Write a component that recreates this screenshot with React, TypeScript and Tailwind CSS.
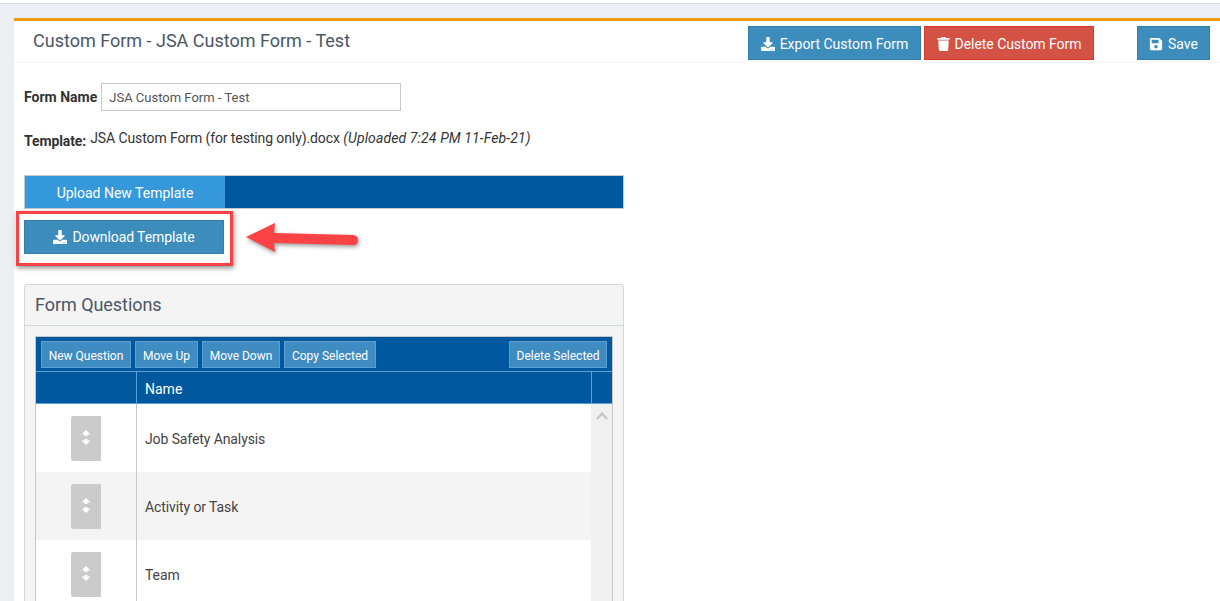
import React from 'react';
import { FaDownload, FaTrash, FaSave } from 'react-icons/fa';

const toolbarButton = 'h-[27px] pt-[3px] bg-[#3f8cc2] border border-[#5b9fd6] text-white text-[12px] leading-none';

const questions = ['Job Safety Analysis', 'Activity or Task', 'Team'];

// two small arrowheads, as in the drag handle
const DragIcon = () => (
  <svg className="mb-[2px]" width="10" height="15" viewBox="0 0 10 15" fill="currentColor">
    <path d="M5 0 L9.5 4.5 L6.5 4.5 L6.5 6 L3.5 6 L3.5 4.5 L0.5 4.5 Z" />
    <path d="M5 15 L9.5 10.5 L6.5 10.5 L6.5 9 L3.5 9 L3.5 10.5 L0.5 10.5 Z" />
  </svg>
);

export default function App() {
  return (
    <div className="h-[601px] overflow-hidden bg-white font-['Roboto',sans-serif] text-[#333]">
      <div className="h-[3px] bg-white" />
      <div className="flex flex-col h-[598px] border-t border-[#d5d8dc] bg-[#ebeef3] pl-[14px] pt-[14px]">
        <div className="relative flex-1 bg-white border-t-[3px] border-[#f39c12]">
          {/* Header */}
          <div className="flex items-start h-[42px] border-b border-[#f4f4f4] pl-[19px] pr-[10px]">
            <h1 className="text-[18px] leading-[40px] text-[#4a5764]">Custom Form - JSA Custom Form - Test</h1>
            <div className="ml-auto flex pt-[5px]">
              <button className="flex items-center h-[34px] w-[173px] pt-[2px] justify-center gap-[5px] bg-[#3c8dbc] border border-[#367fa9] text-white text-[14px]">
                <FaDownload className="w-[14px] h-[14px]" />
                Export Custom Form
              </button>
              <button className="flex items-center h-[34px] w-[170px] pt-[2px] ml-[3px] justify-center gap-[5px] bg-[#d35244] border border-[#d73925] text-white text-[14px] tracking-[-0.05px]">
                <FaTrash className="w-[13px] h-[14px]" />
                Delete Custom Form
              </button>
              <button className="flex items-center h-[34px] w-[73px] pt-[2px] ml-[43px] justify-center gap-[5px] bg-[#3c8dbc] border border-[#367fa9] text-white text-[14px]">
                <FaSave className="w-[14px] h-[14px]" />
                Save
              </button>
            </div>
          </div>

          {/* Body */}
          <div className="w-[610px] pl-[10px]">
            <div className="flex items-center h-[28px] mt-[20px]">
              <span className="text-[14px] font-bold text-[#333]">Form Name</span>
              <div className="flex items-center w-[300px] h-[28px] ml-[4px] pl-[8px] pt-[2px] border border-[#c8c8c8] text-[13px] text-[#555]">
                <span className="-ml-[1px]">JSA Custom Form - Test</span>
              </div>
            </div>

            <div className="flex items-center mt-[15px] h-[24px] text-[14px]">
              <span className="font-bold mr-[4px] mt-[6px] tracking-[-0.1px]">Template:</span>
              <span className="tracking-[-0.1px]">JSA Custom Form (for testing only).docx&nbsp;</span>
              <em className="tracking-[0.12px]">(Uploaded 7:24 PM 11-Feb-21)</em>
            </div>

            <div className="flex h-[34px] mt-[25px] bg-[#00589f] border border-[#c4c9ce]">
              <div className="flex items-center justify-center w-[200px] pt-[2px] bg-[#3498db] text-white text-[14px]">
                Upload New Template
              </div>
            </div>

            <button className="flex items-center justify-center w-[200px] h-[34px] mt-[11px] gap-[5px] bg-[#3c8dbc] border border-[#367fa9] text-white text-[14px] tracking-[-0.1px]">
              <FaDownload className="w-[14px] h-[14px]" />
              Download Template
            </button>

            {/* Form Questions */}
            <div className="h-[400px] mt-[30px] bg-[#f4f4f4] border border-[#d2d6de] rounded-t-[3px]">
              <div className="flex items-center h-[41px] pl-[10px] pb-[2px] border-b border-[#d2d6de] text-[18px] text-[#4a5764] tracking-[-0.05px]">
                Form Questions
              </div>
              <div className="mx-[10px] mt-[10px] border-x border-t border-[#c8c8c8] bg-white">
                <div className="flex items-center h-[34px] bg-[#00589f] pl-[5px] pr-[5px] gap-[4px]">
                  <button className={`${toolbarButton} w-[90px]`}>New Question</button>
                  <button className={`${toolbarButton} w-[63px]`}>Move Up</button>
                  <button className={`${toolbarButton} w-[78px]`}>Move Down</button>
                  <button className={`${toolbarButton} w-[92px]`}>Copy Selected</button>
                  <button className={`${toolbarButton} w-[98px] ml-auto`}>Delete Selected</button>
                </div>
                <div className="flex h-[33px] bg-[#00589f] border-y border-[#5b9fd6] text-white text-[14px]">
                  <div className="w-[101px] border-r border-[#5b9fd6]" />
                  <div className="flex flex-1 items-center pl-[8px] pt-[4px]">Name</div>
                  <div className="w-[21px] border-l border-[#5b9fd6]" />
                </div>
                <div className="flex">
                  <div className="flex-1">
                    {questions.map((q, i) => (
                      <div key={q} className={`flex h-[68px] text-[14px] text-[#444] tracking-[-0.1px] ${i === 1 ? 'bg-[#f4f4f4]' : 'bg-white'}`}>
                        <div className="flex items-start w-[101px] border-r border-[#c8c8c8] pl-[35px] pt-[12px]">
                          <div className="flex items-center justify-center w-[30px] h-[45px] bg-[#cbcbcb] rounded-l-[3px] text-white">
                            <DragIcon />
                          </div>
                        </div>
                        <div className="flex items-center pl-[8px] pt-[2px]">{q}</div>
                      </div>
                    ))}
                  </div>
                  <div className="flex justify-center w-[21px] bg-[#f0f0f0] pt-[7px]">
                    <svg width="12" height="9" viewBox="0 0 12 9" fill="none" stroke="#c6c6c6" strokeWidth="2.4">
                      <path d="M1 8 L6 2.5 L11 8" />
                    </svg>
                  </div>
                </div>
              </div>
            </div>
          </div>

          {/* Annotation: red box and arrow */}
          <div className="absolute left-[2px] top-[190px] w-[217px] h-[55px] border-[3px] border-[#fb4244] shadow-[1px_2px_5px_rgba(0,0,0,0.45)]" />
          <svg className="absolute left-[227px] top-[198px]" width="125" height="42" viewBox="0 0 125 42">
            <path
              d="M5 18 L34 4 L33 14 L112 16 Q117 16.5 117 21 Q117 26 112 26 L33 24 L34 33 Z"
              fill="#fb4244"
              style={{ filter: 'drop-shadow(1px 2px 2px rgba(0,0,0,0.4))' }}
            />
          </svg>
        </div>
      </div>
    </div>
  );
}
